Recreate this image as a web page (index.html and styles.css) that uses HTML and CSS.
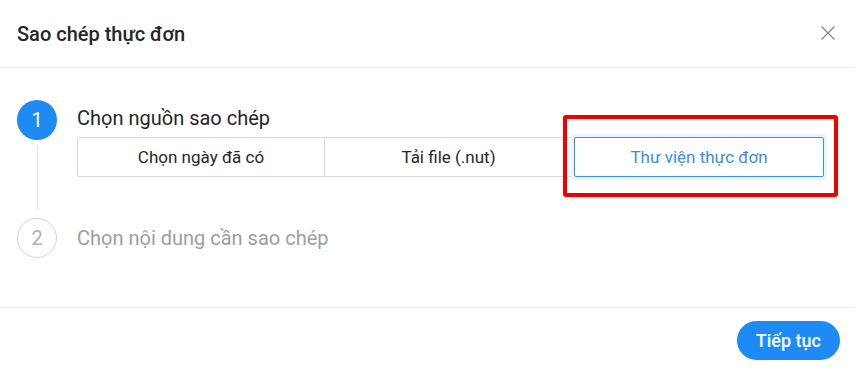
FILE: index.html
```html
<!DOCTYPE html>
<html>
  <head>
    <meta charset="utf-8">
    <title>Sao chép thực đơn</title>
    <link rel="stylesheet" href="styles.css">
  </head>
  <body>
    <div class="modal">
      <div class="head">
        <div class="title">Sao chép thực đơn</div>
        <div class="close">
          <svg width="16" height="16" viewBox="0 0 16 16">
            <path d="M1.5 1.5 L14.5 14.5 M14.5 1.5 L1.5 14.5" stroke="#8c8c8c" stroke-width="1.4" fill="none"/>
          </svg>
        </div>
      </div>
      <div class="body">
        <div class="step active">
          <div class="rail">
            <div class="dot">1</div>
            <div class="line"></div>
          </div>
          <div class="main">
            <div class="stitle">Chọn nguồn sao chép</div>
            <div class="seg">
              <div class="opt">Chọn ngày đã có</div>
              <div class="opt">Tải file (.nut)</div>
              <div class="opt sel">Thư viện thực đơn<div class="mark"></div></div>
            </div>
          </div>
        </div>
        <div class="step wait">
          <div class="rail">
            <div class="dot">2</div>
          </div>
          <div class="main">
            <div class="stitle">Chọn nội dung cần sao chép</div>
          </div>
        </div>
      </div>
      <div class="foot">
        <div class="btn">Tiếp tục</div>
      </div>
    </div>
  </body>
</html>
```

FILE: styles.css
```css
body {
  margin: 0;
  font-family: Roboto, "Liberation Sans", sans-serif;
  background: #ffffff;
  color: #262626;
}
.modal {
  width: 855px;
  height: 370px;
  display: flex;
  flex-direction: column;
}
.head {
  height: 67px;
  border-bottom: 1px solid #ededed;
  display: flex;
  align-items: center;
  justify-content: space-between;
  padding: 0 19px 0 17px;
}
.title {
  font-size: 20px;
  font-weight: 500;
  color: #262626;
}
.close {
  width: 16px;
  height: 16px;
  margin-top: -2px;
}
.close svg {
  display: block;
}
.body {
  height: 240px;
  padding: 32px 31px 0 17px;
  box-sizing: border-box;
  border-bottom: 1px solid #ededed;
}
.step {
  display: flex;
}
.step.active {
  height: 118px;
}
.rail {
  width: 40px;
  display: flex;
  flex-direction: column;
  align-items: center;
}
.dot {
  width: 40px;
  height: 40px;
  box-sizing: border-box;
  border-radius: 50%;
  display: flex;
  align-items: center;
  justify-content: center;
  font-size: 20px;
}
.active .dot {
  background: #1e8bf4;
  color: #ffffff;
}
.wait .dot {
  border: 1px solid #d4d4d4;
  color: #b0b0b0;
}
.line {
  flex: 1;
  width: 1px;
  background: #e3e3e3;
  margin: 5px 0 8px;
}
.main {
  flex: 1;
  margin-left: 20px;
}
.stitle {
  height: 37px;
  line-height: 37px;
  font-size: 20px;
}
.wait .stitle {
  height: 40px;
  line-height: 40px;
  color: #9e9e9e;
}
.seg {
  display: grid;
  grid-template-columns: 248px 248px 1fr;
  height: 40px;
}
.opt {
  position: relative;
  display: flex;
  align-items: center;
  justify-content: center;
  font-size: 17px;
  color: #262626;
  border: 1px solid #d9d9d9;
  border-left: none;
}
.opt:first-child {
  border-left: 1px solid #d9d9d9;
  border-radius: 2px 0 0 2px;
}
.opt.sel {
  margin-left: 1px;
  border: 1px solid #3d8fdf;
  border-radius: 2px;
  color: #3a8ee0;
  box-shadow: 0 0 0 3px #e8f4ff;
}
.mark {
  position: absolute;
  left: -12px;
  right: -15px;
  top: -23px;
  bottom: -21px;
  border: 4px solid #f20000;
  border-radius: 3px;
}
.foot {
  flex: 1;
  display: flex;
  justify-content: flex-end;
  align-items: flex-start;
  padding: 13px 15px 0 0;
}
.btn {
  height: 39px;
  padding: 0 19px;
  border-radius: 20px;
  background: #1e8bf4;
  color: #ffffff;
  font-size: 18px;
  font-weight: 500;
  display: flex;
  align-items: center;
}
```
